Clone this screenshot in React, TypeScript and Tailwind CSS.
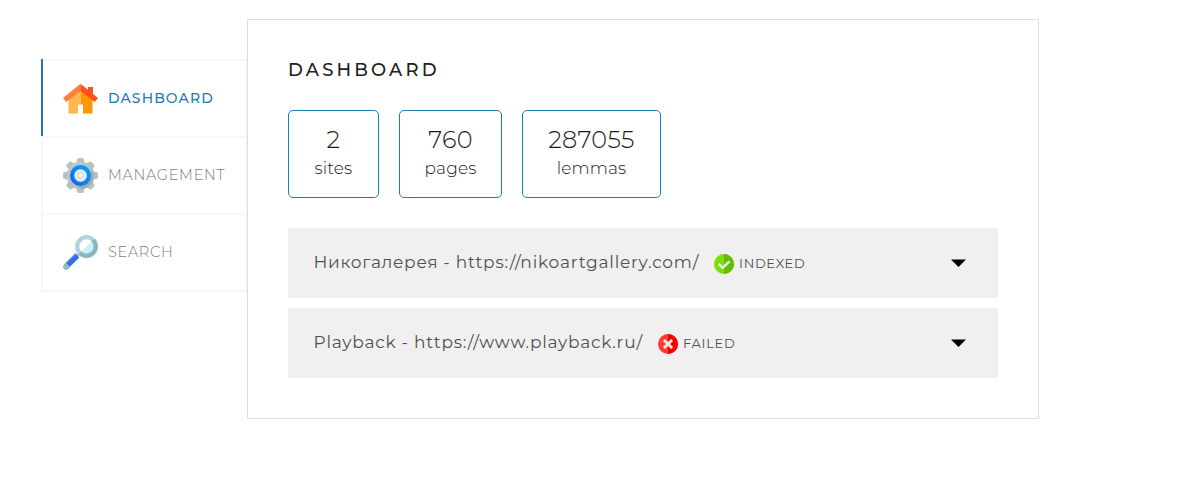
import type { ReactNode } from "react";

function HouseIcon() {
  return (
    <svg className="size-9 shrink-0" viewBox="0 0 36 36">
      <path d="M5.500 17 17.500 7V32.500H5.500Z" fill="#ffb74d" />
      <path d="M17.500 7 29.500 17V32.500H17.500Z" fill="#ff9800" />
      <path d="M15 23.500H20V33H15Z" fill="#fff" />
      <path d="M25 6H30V14.500L25 10.500Z" fill="#ff4f1f" />
      <path d="M17.500 2.800 0 17 3.200 21 17.500 10Z" fill="#ff7c43" />
      <path d="M17.500 2.800 35 17 31.800 21 17.500 10Z" fill="#ff4f1f" />
    </svg>
  );
}

const teeth = [0, 45, 90, 135, 180, 225, 270, 315];

function GearIcon() {
  return (
    <svg className="size-9 shrink-0" viewBox="0.5 0.5 36 36">
      <defs>
        <linearGradient id="gear" x1="0" y1="0" x2="1" y2="1">
          <stop offset="0" stopColor="#c3cdce" />
          <stop offset="1" stopColor="#a8b4b5" />
        </linearGradient>
        <linearGradient id="ring" x1="1" y1="0" x2="0" y2="1">
          <stop offset="0" stopColor="#00a0ff" />
          <stop offset="1" stopColor="#0869ef" />
        </linearGradient>
      </defs>
      <g fill="#b5c0c1">
        {teeth.map((a) => (
          <path key={a} d="M13.600 6 15 .800Q18 .300 21 .800L22.400 6Z" transform={`rotate(${a} 18 18)`} />
        ))}
      </g>
      <circle cx="18" cy="18" r="13.800" fill="url(#gear)" />
      <path d="M25 11 31.500 17Q31 29 18 31.500L11 25Z" fill="#899697" opacity=".4" />
      <circle cx="18" cy="18" r="8.500" fill="#d3d8d9" stroke="url(#ring)" strokeWidth="4" />
      <circle cx="18" cy="18" r="4.300" fill="#c3cacb" stroke="#f0f2f2" strokeWidth="2" />
      <circle cx="18" cy="18" r="2.300" fill="#fff" />
    </svg>
  );
}

function SearchIcon() {
  return (
    <svg className="size-9 shrink-0" viewBox="0.5 0.5 36 36">
      <path d="m13 23 4-4" stroke="#91b6be" strokeWidth="2" />
      <circle cx="24" cy="12" r="9" fill="#fff" />
      <path d="M29.700 6.300A8 8 0 0 1 18.300 17.700Z" fill="#c0f4ff" />
      <circle cx="24" cy="12" r="9.300" fill="none" stroke="#acd5df" strokeWidth="4.200" />
      <path d="M30.600 5.400A9.300 9.300 0 0 1 17.400 18.600" fill="none" stroke="#8eb5bf" strokeWidth="4.200" />
      <path d="M3.600 32.400 15 21.200" stroke="#346fe5" strokeWidth="5.200" />
      <path d="M2.700 29.700 13.600 19" stroke="#4c8af5" strokeWidth="1.500" />
      <path d="M1.500 30.200 3.400 28.300 7.700 32.600 5.800 34.500A3 3 0 0 1 1.500 30.200Z" fill="#93b9c1" />
    </svg>
  );
}

function StatusIcon({ ok }: { ok: boolean }) {
  return (
    <svg className="size-5 shrink-0" viewBox="0 0 20 20">
      <circle cx="10" cy="10" r="10" fill={ok ? "#7adf00" : "#ff3838"} />
      <path d="M10 0A10 10 0 0 1 10 20Z" fill={ok ? "#66bb00" : "#fa0000"} />
      <path
        d={ok ? "m4.500 9.600 4.100 4.200 6.900-6.500" : "m5.900 5.900 8.200 8.200M14.100 5.900 5.900 14.100"}
        fill="none"
        stroke="#e8eee4"
        strokeWidth={ok ? 2.5 : 2.8}
      />
    </svg>
  );
}

function NavItem({ icon, active, children }: { icon: ReactNode; active?: boolean; children: ReactNode }) {
  return (
    <a className={`flex h-[77px] items-center border-l-2 border-[#f7f7f7] ${active ? "relative" : ""}`}>
      {active && <span className="absolute -left-0.5 top-0 h-[77px] w-0.5 bg-[#1f7bb6]" />}
      <div className="flex h-full flex-1 items-center border-t-2 border-[#f7f7f7] pl-5">
        {icon}
        {children}
      </div>
    </a>
  );
}

function Stat({ size, value, label }: { size: string; value: ReactNode; label: ReactNode }) {
  return (
    <div className={`flex h-[88px] flex-col items-center rounded-[5px] border border-[#1f7bb6] pt-[14px] font-light text-[#1c1c1c] ${size}`}>
      {value}
      {label}
    </div>
  );
}

function SiteRow({ title, status, ok }: { title: ReactNode; status: ReactNode; ok: boolean }) {
  return (
    <div className="flex h-[70px] items-center bg-[#f0f0f0] pl-[25.5px] pr-8 text-[#505050]">
      <div className="pb-0.5 text-[17px] leading-6">{title}</div>
      <div className="flex items-center gap-[5px] pt-[2px] text-[13px] leading-5">
        <StatusIcon ok={ok} />
        {status}
      </div>
      <svg className="ml-auto h-2 w-[15px]" viewBox="0 0 15 8">
        <path d="M0 .500H15L7.500 8Z" fill="#000" />
      </svg>
    </div>
  );
}

export default function App() {
  return (
    <div className="flex h-[502px] items-start bg-white pl-[41px] pt-[19px] font-['Montserrat','Inter',sans-serif]">
      <nav className="mt-10 w-[206px] border-b-2 border-r-2 border-[#f7f7f7] text-[14px] text-[#7c7c7c]">
        <NavItem icon={<HouseIcon />} active>
          <span className="ml-[9px] font-[550] tracking-[1.1px] text-[#1f7bb6]">DASHBOARD</span>
        </NavItem>
        <NavItem icon={<GearIcon />}>
          <span className="ml-[9px] pb-0.5 text-[14.5px] font-light leading-5 tracking-[0.7px]">MANAGEMENT</span>
        </NavItem>
        <NavItem icon={<SearchIcon />}>
          <span className="ml-[9px] pb-0.5 text-[14.5px] font-light leading-5 tracking-[0.7px]">SEARCH</span>
        </NavItem>
      </nav>
      <main className="h-[400px] w-[792px] border border-[#dddddd] px-10 pt-[38px]">
        <h1 className="h-[52px] text-[18px] font-[550] leading-6 tracking-[3.15px] text-[#202020]">DASHBOARD</h1>
        <div className="flex gap-5">
          <Stat
            size="w-[91px]"
            value={<span className="text-[24px] leading-[30px] tracking-[0.3px]">2</span>}
            label={<span className="text-[17px] leading-[26px] tracking-[0.15px]">sites</span>}
          />
          <Stat
            size="w-[103px]"
            value={<span className="text-[24px] leading-[30px] tracking-[0.3px]">760</span>}
            label={<span className="text-[17px] leading-[26px] tracking-[0.15px]">pages</span>}
          />
          <Stat
            size="w-[139px]"
            value={<span className="text-[24px] leading-[30px] tracking-[0.3px]">287055</span>}
            label={<span className="text-[17px] leading-[26px] tracking-[0.15px]">lemmas</span>}
          />
        </div>
        <div className="mt-[30px] flex flex-col gap-2.5">
          <SiteRow
            ok
            title={
              <div className="w-[400.5px] whitespace-nowrap tracking-[0.79px]">
                <span className="tracking-[0.66px]">Никогалерея - </span>https://nikoartgallery.com/
              </div>
            }
            status={<span className="pb-0.5 tracking-[0.7px]">INDEXED</span>}
          />
          <SiteRow
            ok={false}
            title={<div className="w-[344.5px] whitespace-nowrap tracking-[0.76px]">Playback - https://www.playback.ru/</div>}
            status={<span className="pb-0.5 tracking-[0.7px]">FAILED</span>}
          />
        </div>
      </main>
    </div>
  );
}
